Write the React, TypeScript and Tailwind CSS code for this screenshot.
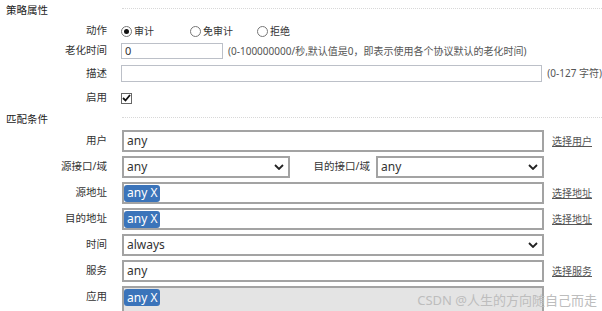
import React from "react";

const labelCls = "w-[107px] shrink-0 text-right text-[10.5px] text-[#333]";

function Chevron() {
  return (
    <svg width="10" height="6" viewBox="0 0 10 6" className="shrink-0">
      <polyline points="1,1 5,5 9,1" fill="none" stroke="#222" strokeWidth="1.8" />
    </svg>
  );
}

function Chip() {
  return (
    <span className="flex h-[17px] items-center rounded-[3px] bg-[#3b74ba] px-[3px] text-[12px] leading-none text-white">
      any X
    </span>
  );
}

function SectionHeader({ title }: { title: string }) {
  return (
    <div className="flex h-[18px] items-start">
      <span className="w-[122px] shrink-0 pl-[6px] text-[10.5px] leading-[14px] text-[#222]">{title}</span>
      <div className="mt-[5px] h-0 flex-1 border-t border-dotted border-[#d8d8d8]" />
    </div>
  );
}

function Radio({ checked, label, width }: { checked?: boolean; label: string; width: string }) {
  return (
    <div className={`flex items-center gap-[2px] ${width}`}>
      <span className="flex h-[11px] w-[11px] items-center justify-center rounded-full border border-[#777] bg-white">
        {checked && <span className="h-[5px] w-[5px] rounded-full bg-[#111]" />}
      </span>
      <span className="text-[10px] text-[#333]">{label}</span>
    </div>
  );
}

function Row({ label, children, link }: { label: string; children: React.ReactNode; link?: string }) {
  return (
    <div className="flex h-[22px] items-center">
      <span className={labelCls}>{label}</span>
      <div className="ml-[15px] flex h-full w-[422px] items-center">{children}</div>
      {link && (
        <a className="ml-[8px] text-[10px] text-[#555] underline">{link}</a>
      )}
    </div>
  );
}

const boxCls = "flex h-full w-full items-center border-2 border-[#a3a3a3] bg-white";

export default function App() {
  return (
    <div className="relative h-[311px] w-[602px] overflow-hidden bg-white font-['Noto_Sans','Noto_Sans_CJK_SC',sans-serif] text-[#333]">
      <div className="pt-[3px]">
        <SectionHeader title="策略属性" />
      </div>

      {/* 动作 */}
      <div className="flex h-[20px] items-center">
        <span className={labelCls}>动作</span>
        <div className="ml-[14px] flex items-center">
          <Radio checked label="审计" width="w-[69px]" />
          <Radio label="免审计" width="w-[67px]" />
          <Radio label="拒绝" width="w-[60px]" />
        </div>
      </div>

      {/* 老化时间 */}
      <div className="flex h-[20px] items-center">
        <span className={labelCls}>老化时间</span>
        <div className="ml-[14px] flex h-[16px] w-[102px] items-center border border-[#bcc0c8] bg-white px-[3px] text-[11px]">0</div>
        <span className="ml-[5px] whitespace-nowrap text-[10px] text-[#555]">
          (0-100000000/秒,默认值是0，即表示使用各个协议默认的老化时间)
        </span>
      </div>

      {/* 描述 */}
      <div className="mt-[2px] flex h-[21px] items-center">
        <span className={labelCls}>描述</span>
        <div className="ml-[14px] h-[17px] w-[423px] border border-[#bcc0c8] bg-white" />
        <span className="ml-[5px] whitespace-nowrap text-[10px] text-[#555]">(0-127 字符)</span>
      </div>

      {/* 启用 */}
      <div className="flex h-[28px] items-center">
        <span className={labelCls}>启用</span>
        <span className="ml-[14px] flex h-[11px] w-[11px] items-center justify-center border border-[#666] bg-white">
          <svg width="9" height="8" viewBox="0 0 9 8">
            <polyline points="1,4 3.5,6.5 8,1" fill="none" stroke="#111" strokeWidth="1.8" />
          </svg>
        </span>
      </div>

      <SectionHeader title="匹配条件" />

      <div className="flex flex-col gap-[4px]">
        <Row label="用户" link="选择用户">
          <div className={`${boxCls} px-[3px] text-[12px]`}>any</div>
        </Row>

        <div className="flex h-[22px] items-center">
          <span className={labelCls}>源接口/域</span>
          <div className="ml-[15px] flex h-full w-[168px] items-center justify-between border-2 border-[#a3a3a3] bg-white pl-[3px] pr-[4px] text-[12px]">
            any
            <Chevron />
          </div>
          <span className="w-[86px] shrink-0 pr-[6px] text-right text-[10.5px] text-[#333]">目的接口/域</span>
          <div className="flex h-full w-[168px] items-center justify-between border-2 border-[#a3a3a3] bg-white pl-[3px] pr-[4px] text-[12px]">
            any
            <Chevron />
          </div>
        </div>

        <Row label="源地址" link="选择地址">
          <div className={boxCls}>
            <Chip />
          </div>
        </Row>

        <Row label="目的地址" link="选择地址">
          <div className={boxCls}>
            <Chip />
          </div>
        </Row>

        <Row label="时间">
          <div className={`${boxCls} justify-between pl-[3px] pr-[4px] text-[12px]`}>
            always
            <Chevron />
          </div>
        </Row>

        <Row label="服务" link="选择服务">
          <div className={`${boxCls} px-[3px] text-[12px]`}>any</div>
        </Row>

        <div className="flex h-[26px] items-start">
          <span className={`${labelCls} pt-[3px]`}>应用</span>
          <div className="ml-[15px] flex h-full w-[422px] items-start border-2 border-b-0 border-[#a3a3a3] bg-[#e4e4e4] pt-[1px]">
            <Chip />
          </div>
        </div>
      </div>

      <div className="absolute right-[5px] top-[291px] whitespace-nowrap text-[13px] text-[#bdbdbd]">
        CSDN @人生的方向随自己而走
      </div>
    </div>
  );
}
